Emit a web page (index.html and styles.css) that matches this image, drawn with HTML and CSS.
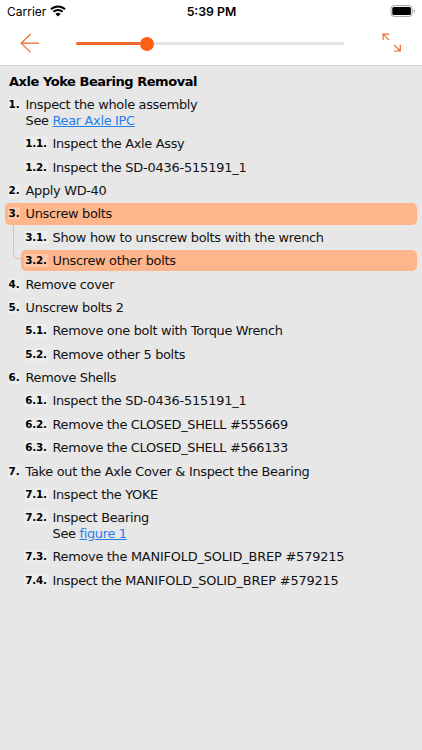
FILE: index.html
```html
<!DOCTYPE html>
<html lang="en">
<head>
    <meta charset="UTF-8">
    <meta name="viewport" content="width=device-width, initial-scale=1.0">
    <title>Axle Yoke Bearing Removal</title>
    <link rel="stylesheet" href="styles.css">
</head>
<body>
    <header class="header">
        <div class="status-bar">
            <div class="carrier">
                <span>Carrier</span>
                <svg class="wifi" width="16" height="12" viewBox="0 0 16 12">
                    <path d="M1 4.3a10 10 0 0 1 14 0M3.4 6.8a6.5 6.5 0 0 1 9.2 0" fill="none" stroke="#000" stroke-width="2"/>
                    <path d="M8 11.6L5.4 9a3.7 3.7 0 0 1 5.2 0z"/>
                </svg>
            </div>
            <div class="time">5:39 PM</div>
            <svg class="battery" width="26" height="13" viewBox="0 0 26 13">
                <rect x="1" y="0.6" width="21.2" height="10.8" rx="3.2" fill="none" stroke="#a0a0a0"/>
                <rect x="2.3" y="1.9" width="18.6" height="8.2" rx="1.6"/>
                <path d="M23.6 4.2q1.3.6 1.3 1.8t-1.3 1.8z" fill="#a0a0a0"/>
            </svg>
        </div>
        <nav class="toolbar">
            <button class="icon-btn" aria-label="Back">
                <svg width="20" height="20" viewBox="0 0 20 20">
                    <path d="M19 10.2H1.2M10.6 1L1.2 10.2l9.4 9.2"/>
                </svg>
            </button>
            <div class="slider">
                <div class="slider-fill"></div>
                <div class="slider-thumb"></div>
                <div class="slider-rest"></div>
            </div>
            <button class="icon-btn" aria-label="Expand">
                <svg width="20" height="20" viewBox="0 0 20 20">
                    <path d="M8.2 1.1H2.1V7.1M2.1 1.1L8.2 7.2M13 18h6.3v-6.3M19.3 18L13.2 11.8"/>
                </svg>
            </button>
        </nav>
    </header>

    <main class="content">
        <h1>Axle Yoke Bearing Removal</h1>
        <ul class="steps">
            <li class="step"><span class="num">1.</span><p>Inspect the whole assembly<br>See <a href="#">Rear Axle IPC</a></p></li>
            <li class="step sub"><span class="num">1.1.</span><p>Inspect the Axle Assy</p></li>
            <li class="step sub"><span class="num">1.2.</span><p>Inspect the <span class="part">SD-0436-515191_1</span></p></li>
            <li class="step"><span class="num">2.</span><p>Apply WD-40</p></li>
            <li class="step active"><span class="num">3.</span><p>Unscrew bolts</p></li>
            <li class="step sub"><span class="num">3.1.</span><p>Show how to unscrew bolts with the wrench</p></li>
            <li class="step sub active"><span class="num">3.2.</span><p>Unscrew other bolts</p></li>
            <li class="step"><span class="num">4.</span><p>Remove cover</p></li>
            <li class="step"><span class="num">5.</span><p>Unscrew bolts 2</p></li>
            <li class="step sub"><span class="num">5.1.</span><p>Remove one bolt with Torque Wrench</p></li>
            <li class="step sub"><span class="num">5.2.</span><p>Remove other 5 bolts</p></li>
            <li class="step"><span class="num">6.</span><p>Remove Shells</p></li>
            <li class="step sub"><span class="num">6.1.</span><p>Inspect the <span class="part">SD-0436-515191_1</span></p></li>
            <li class="step sub"><span class="num">6.2.</span><p>Remove the CLOSED_SHELL #555669</p></li>
            <li class="step sub"><span class="num">6.3.</span><p>Remove the CLOSED_SHELL #566133</p></li>
            <li class="step"><span class="num">7.</span><p>Take out the Axle Cover &amp; Inspect the Bearing</p></li>
            <li class="step sub"><span class="num">7.1.</span><p>Inspect the YOKE</p></li>
            <li class="step sub"><span class="num">7.2.</span><p>Inspect Bearing<br>See <a href="#">figure 1</a></p></li>
            <li class="step sub"><span class="num">7.3.</span><p>Remove the <span class="part">MANIFOLD_SOLID_BREP #579215</span></p></li>
            <li class="step sub"><span class="num">7.4.</span><p>Inspect the <span class="part">MANIFOLD_SOLID_BREP #579215</span></p></li>
        </ul>
    </main>
</body>
</html>
```
FILE: styles.css
```css
* {
    box-sizing: border-box;
}

body {
    margin: 0;
    height: 100vh;
    display: flex;
    flex-direction: column;
    overflow: hidden;
    background: #e7e7e7;
    color: #111;
    font-family: Verdana, "DejaVu Sans", sans-serif;
    font-size: 12.9px;
    letter-spacing: -0.3px;
}

.header {
    height: 66px;
    background: #fff;
    border-bottom: 1px solid #d4d4d4;
}

.status-bar {
    height: 22px;
    padding: 0 6px 0 7px;
    display: grid;
    grid-template-columns: 1fr auto 1fr;
    align-items: center;
    color: #000;
    font-family: Inter, sans-serif;
    font-size: 12px;
    letter-spacing: 0;
}

.carrier {
    display: flex;
    align-items: center;
    gap: 4px;
}

.time {
    font-size: 12.3px;
    font-weight: 600;
}

.battery {
    justify-self: end;
}

.toolbar {
    height: 43px;
    padding: 0 21px 0 20px;
    display: flex;
    align-items: center;
}

.icon-btn {
    width: 20px;
    height: 20px;
    margin: -1px 0 0;
    padding: 0;
    border: none;
    background: none;
}

.icon-btn svg {
    display: block;
    fill: none;
    stroke: #f0692c;
    stroke-width: 1.2;
}

.slider {
    flex: 1;
    margin: 0 37px 0 36px;
    display: flex;
    align-items: center;
}

.slider-fill {
    width: 64px;
    height: 3px;
    border-radius: 2px 0 0 2px;
    background: #f0692c;
}

.slider-thumb {
    width: 14px;
    height: 14px;
    border-radius: 50%;
    background: #fc6014;
}

.slider-rest {
    flex: 1;
    height: 3px;
    background: #e3e3e3;
}

.content {
    padding: 8px 5px 0;
}

h1 {
    margin: 0 0 4px 4px;
    color: #000;
    font-size: 13px;
    letter-spacing: -0.46px;
    line-height: 16px;
}

.steps {
    margin: 0;
    padding: 0;
    list-style: none;
    display: flex;
    flex-direction: column;
    gap: 2px;
}

.step {
    position: relative;
    min-height: 21.4px;
    padding: 3.2px 0 2.6px 3px;
    display: flex;
    border-radius: 5px;
    line-height: 15.6px;
}

.step p {
    margin: 0;
}

.num {
    width: 12px;
    height: 13px;
    margin: 1px 5.5px 0 0;
    border-radius: 2px;
    background: rgba(255, 255, 255, 0.25);
    color: #000;
    font-size: 10.4px;
    font-weight: bold;
    letter-spacing: -0.2px;
    line-height: 13px;
    text-align: center;
}

.sub {
    margin-left: 16px;
}

.sub .num {
    width: 24px;
    margin-right: 4.5px;
}

.part {
    letter-spacing: -0.17px;
}

.active {
    background: #ffb58b;
}

/* line from the active step down to its active sub-step */
.sub.active::before {
    content: "";
    position: absolute;
    left: -8px;
    bottom: 12px;
    width: 8px;
    height: 35px;
    border: solid #ffb58b;
    border-width: 0 0 1px 1px;
    border-bottom-left-radius: 5px;
}

a {
    color: #1f7fee;
}
```
